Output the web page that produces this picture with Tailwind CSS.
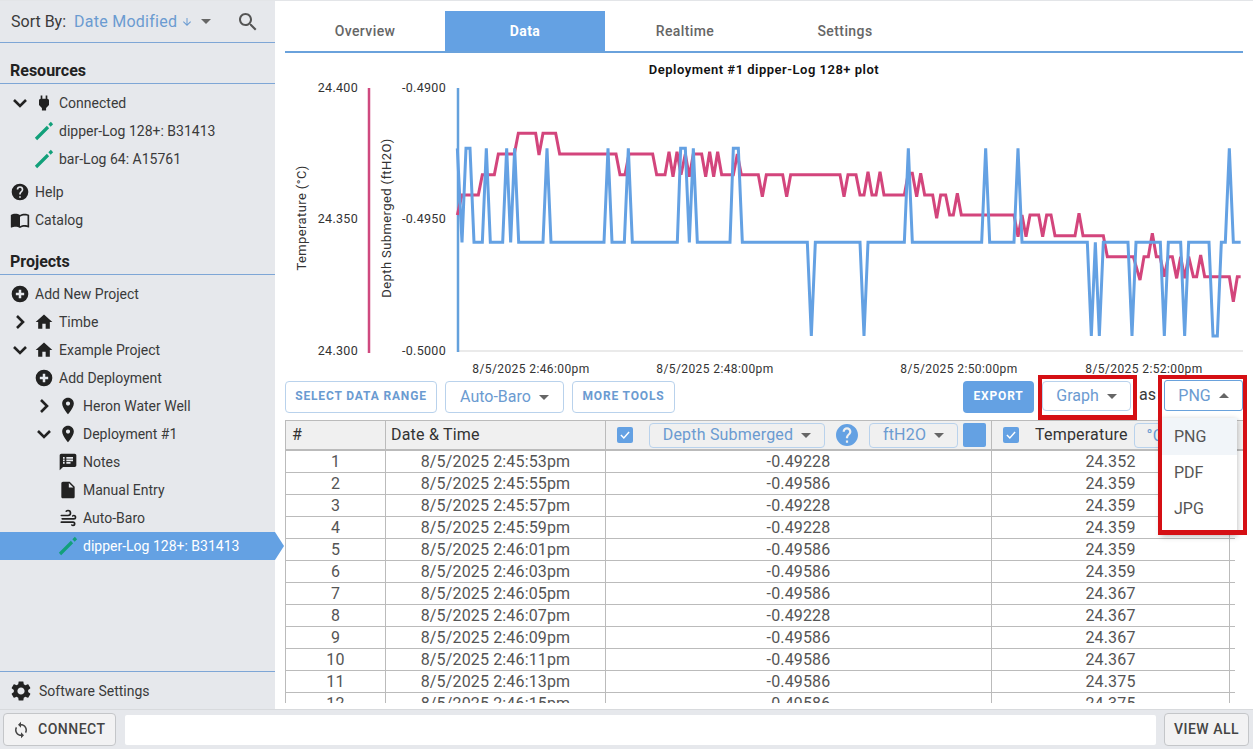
<!DOCTYPE html>
<html lang="en">
<head>
<meta charset="UTF-8" />
<title>Deployment Data</title>
<script src="https://cdn.jsdelivr.net/npm/@tailwindcss/browser@4"></script>
</head>
<body class="bg-white overflow-hidden">
<div class="w-[1253px] h-[749px] flex flex-col border-t border-[#e3e5e8] [font-family:Roboto,sans-serif] text-[14px] text-[#3a3a3a]">
  <div class="flex flex-1 min-h-0">

    <!-- sidebar -->
    <aside class="w-[275px] shrink-0 bg-[#e6e8ec] flex flex-col relative">
      <div class="h-[42px] flex items-center pl-[11px] border-b border-[#7ea6d6] text-[16px]">
        <span>Sort By:</span>
        <span class="ml-2 text-[#6b9bd1] tracking-[0.25px]">Date Modified</span>
        <svg class="ml-[4px] w-[12px] h-[12px]" viewBox="0 0 24 24" fill="#6b9bd1"><path d="M20 12l-1.41-1.41L13 16.17V4h-2v12.17l-5.58-5.59L4 12l8 8 8-8z"/></svg>
        <span class="ml-[8px] w-0 h-0 border-x-[5px] border-x-transparent border-t-[5px] border-t-[#666]"></span>
        <svg class="ml-[25px] w-[24px] h-[24px]" viewBox="0 0 24 24" fill="#555"><path d="M15.5 14h-.79l-.28-.27C15.41 12.59 16 11.11 16 9.5 16 5.91 13.09 3 9.5 3S3 5.91 3 9.5 5.91 16 9.5 16c1.61 0 3.09-.59 4.23-1.57l.27.28v.79l5 4.99L20.49 19l-4.99-5zm-6 0C7.01 14 5 11.99 5 9.5S7.01 5 9.5 5 14 7.01 14 9.5 11.99 14 9.5 14z"/></svg>
      </div>

      <h2 class="h-[41px] pl-[10px] pt-[18px] leading-[19px] text-[16px] font-bold text-[#222] border-b border-[#7ea6d6]">Resources</h2>
      <div class="pt-[5px]">
        <div class="h-7 flex items-center pl-2">
          <svg class="w-6 h-6" viewBox="0 0 24 24" fill="none" stroke="#222" stroke-width="2.6"><path d="M6 9l6 6 6-6"/></svg>
          <svg class="w-6 h-[20px]" viewBox="0 0 24 24" fill="#222"><path d="M16,7V3H14V7H10V3H8V7C7,7 6,8 6,9V14.5L9.5,18V21H14.5V18L18,14.5V9C18,8 17,7 16,7Z"/></svg>
          <span class="ml-[3px]">Connected</span>
        </div>
        <div class="h-7 flex items-center pl-8">
          <svg class="w-6 h-6" viewBox="0 0 24 24" fill="none" stroke="#12a07a" stroke-width="3.2"><path d="M4 20L16 8M17.5 6.5L20 4"/></svg>
          <span class="ml-[3px]">dipper-Log 128+: B31413</span>
        </div>
        <div class="h-7 flex items-center pl-8">
          <svg class="w-6 h-6" viewBox="0 0 24 24" fill="none" stroke="#12a07a" stroke-width="3.2"><path d="M4 20L16 8M17.5 6.5L20 4"/></svg>
          <span class="ml-[3px]">bar-Log 64: A15761</span>
        </div>
        <div class="h-7 flex items-center pl-2 mt-[5px]">
          <svg class="w-6 h-[20px]" viewBox="0 0 24 24" fill="#222"><path d="M15.07,11.25L14.17,12.17C13.45,12.89 13,13.5 13,15H11V14.5C11,13.39 11.45,12.39 12.17,11.67L13.41,10.41C13.78,10.05 14,9.55 14,9C14,7.89 13.1,7 12,7A2,2 0 0,0 10,9H8A4,4 0 0,1 12,5A4,4 0 0,1 16,9C16,9.88 15.64,10.67 15.07,11.25M13,19H11V17H13M12,2A10,10 0 0,0 2,12A10,10 0 0,0 12,22A10,10 0 0,0 22,12C22,6.47 17.5,2 12,2Z"/></svg>
          <span class="ml-[3px]">Help</span>
        </div>
        <div class="h-7 flex items-center pl-2">
          <svg class="w-6 h-[20px]" viewBox="0 0 24 24" fill="#222"><path d="M21 5c-1.11-.35-2.33-.5-3.5-.5-1.95 0-4.05.4-5.5 1.5-1.45-1.1-3.55-1.5-5.5-1.5S2.45 4.9 1 6v14.65c0 .25.25.5.5.5.1 0 .15-.05.25-.05C3.1 20.45 5.05 20 6.5 20c1.95 0 4.05.4 5.5 1.5 1.35-.85 3.8-1.5 5.5-1.5 1.65 0 3.35.3 4.75 1.05.1.05.15.05.25.05.25 0 .5-.25.5-.5V6c-.6-.45-1.25-.75-2-1zm0 13.5c-1.1-.35-2.3-.5-3.5-.5-1.7 0-4.15.65-5.5 1.5V8c1.35-.85 3.8-1.5 5.5-1.5 1.2 0 2.4.15 3.5.5v11.5z"/></svg>
          <span class="ml-[3px]">Catalog</span>
        </div>
      </div>

      <h2 class="h-[41px] pl-[10px] pt-[18px] leading-[19px] text-[16px] font-bold text-[#222] border-b border-[#7ea6d6]">Projects</h2>
      <div class="pt-[5px]">
        <div class="h-7 flex items-center pl-2">
          <svg class="w-6 h-[20px]" viewBox="0 0 24 24" fill="#222"><path d="M17,13.5H13.5V17H10.5V13.5H7V10.5H10.5V7H13.5V10.5H17M12,2A10,10 0 0,0 2,12A10,10 0 0,0 12,22A10,10 0 0,0 22,12A10,10 0 0,0 12,2Z"/></svg>
          <span class="ml-[3px]">Add New Project</span>
        </div>
        <div class="h-7 flex items-center pl-2">
          <svg class="w-6 h-6" viewBox="0 0 24 24" fill="none" stroke="#222" stroke-width="2.6"><path d="M9 6l6 6-6 6"/></svg>
          <svg class="w-6 h-[20px]" viewBox="0 0 24 24" fill="#222"><path d="M10 20v-6h4v6h5v-8h3L12 3 2 12h3v8z"/></svg>
          <span class="ml-[3px]">Timbe</span>
        </div>
        <div class="h-7 flex items-center pl-2">
          <svg class="w-6 h-6" viewBox="0 0 24 24" fill="none" stroke="#222" stroke-width="2.6"><path d="M6 9l6 6 6-6"/></svg>
          <svg class="w-6 h-[20px]" viewBox="0 0 24 24" fill="#222"><path d="M10 20v-6h4v6h5v-8h3L12 3 2 12h3v8z"/></svg>
          <span class="ml-[3px]">Example Project</span>
        </div>
        <div class="h-7 flex items-center pl-8">
          <svg class="w-6 h-[20px]" viewBox="0 0 24 24" fill="#222"><path d="M17,13.5H13.5V17H10.5V13.5H7V10.5H10.5V7H13.5V10.5H17M12,2A10,10 0 0,0 2,12A10,10 0 0,0 12,22A10,10 0 0,0 22,12A10,10 0 0,0 12,2Z"/></svg>
          <span class="ml-[3px]">Add Deployment</span>
        </div>
        <div class="h-7 flex items-center pl-8">
          <svg class="w-6 h-6" viewBox="0 0 24 24" fill="none" stroke="#222" stroke-width="2.6"><path d="M9 6l6 6-6 6"/></svg>
          <svg class="w-6 h-[20px]" viewBox="0 0 24 24" fill="#222"><path d="M12 2C8.13 2 5 5.13 5 9c0 5.25 7 13 7 13s7-7.75 7-13c0-3.87-3.13-7-7-7zm0 9.5c-1.38 0-2.5-1.12-2.5-2.5s1.12-2.5 2.5-2.5 2.5 1.12 2.5 2.5-1.12 2.5-2.5 2.5z"/></svg>
          <span class="ml-[3px]">Heron Water Well</span>
        </div>
        <div class="h-7 flex items-center pl-8">
          <svg class="w-6 h-6" viewBox="0 0 24 24" fill="none" stroke="#222" stroke-width="2.6"><path d="M6 9l6 6 6-6"/></svg>
          <svg class="w-6 h-[20px]" viewBox="0 0 24 24" fill="#222"><path d="M12 2C8.13 2 5 5.13 5 9c0 5.25 7 13 7 13s7-7.75 7-13c0-3.87-3.13-7-7-7zm0 9.5c-1.38 0-2.5-1.12-2.5-2.5s1.12-2.5 2.5-2.5 2.5 1.12 2.5 2.5-1.12 2.5-2.5 2.5z"/></svg>
          <span class="ml-[3px]">Deployment #1</span>
        </div>
        <div class="h-7 flex items-center pl-14">
          <svg class="w-6 h-[20px]" viewBox="0 0 24 24" fill="#222"><path d="M20 2H4c-1.1 0-1.99.9-1.99 2L2 22l4-4h14c1.1 0 2-.9 2-2V4c0-1.1-.9-2-2-2zM8 14H6v-2h2v2zm0-3H6V9h2v2zm0-3H6V6h2v2zm7 6h-5v-2h5v2zm3-3h-8V9h8v2zm0-3h-8V6h8v2z"/></svg>
          <span class="ml-[3px]">Notes</span>
        </div>
        <div class="h-7 flex items-center pl-14">
          <svg class="w-6 h-[20px]" viewBox="0 0 24 24" fill="#222"><path d="M6 2c-1.1 0-1.99.9-1.99 2L4 20c0 1.1.89 2 1.99 2H18c1.1 0 2-.9 2-2V8l-6-6H6zm7 7V3.5L18.5 9H13z"/></svg>
          <span class="ml-[3px]">Manual Entry</span>
        </div>
        <div class="h-7 flex items-center pl-14">
          <svg class="w-6 h-[20px]" viewBox="0 0 24 24" fill="#222"><path d="M4,10A1,1 0 0,1 3,9A1,1 0 0,1 4,8H12A2,2 0 0,0 14,6A2,2 0 0,0 12,4C11.45,4 10.95,4.22 10.59,4.59C10.2,5 9.56,5 9.17,4.59C8.78,4.2 8.78,3.56 9.17,3.17C9.9,2.45 10.9,2 12,2A4,4 0 0,1 16,6A4,4 0 0,1 12,10H4M19,12A1,1 0 0,0 20,11A1,1 0 0,0 19,10C18.72,10 18.47,10.11 18.29,10.29C17.9,10.68 17.27,10.68 16.88,10.29C16.5,9.9 16.5,9.27 16.88,8.88C17.42,8.34 18.17,8 19,8A3,3 0 0,1 22,11A3,3 0 0,1 19,14H5A1,1 0 0,1 4,13A1,1 0 0,1 5,12H19M18,18H4A1,1 0 0,1 3,17A1,1 0 0,1 4,16H18A3,3 0 0,1 21,19A3,3 0 0,1 18,22C17.17,22 16.42,21.66 15.88,21.12C15.5,20.73 15.5,20.1 15.88,19.71C16.27,19.32 16.9,19.32 17.29,19.71C17.47,19.89 17.72,20 18,20A1,1 0 0,0 19,19A1,1 0 0,0 18,18Z"/></svg>
          <span class="ml-[3px]">Auto-Baro</span>
        </div>
        <div class="h-7 flex items-center pl-14 bg-[#64a1e3] text-white relative">
          <svg class="w-6 h-6" viewBox="0 0 24 24" fill="none" stroke="#12a07a" stroke-width="3.2"><path d="M4 20L16 8M17.5 6.5L20 4"/></svg>
          <span class="ml-[3px]">dipper-Log 128+: B31413</span>
          <span class="absolute left-full top-0 w-0 h-0 border-y-[14px] border-y-transparent border-l-[9px] border-l-[#64a1e3]"></span>
        </div>
      </div>

      <div class="mt-auto h-[38px] pt-px border-t border-[#7ea6d6] flex items-center pl-[9px]">
        <svg class="w-6 h-6" viewBox="0 0 24 24" fill="#222"><path d="M19.14 12.94c.04-.3.06-.61.06-.94 0-.32-.02-.64-.07-.94l2.03-1.58c.18-.14.23-.41.12-.61l-1.92-3.32c-.12-.22-.37-.29-.59-.22l-2.39.96c-.5-.38-1.03-.7-1.62-.94l-.36-2.54c-.04-.24-.24-.41-.48-.41h-3.84c-.24 0-.43.17-.47.41l-.36 2.54c-.59.24-1.13.57-1.62.94l-2.39-.96c-.22-.08-.47 0-.59.22L2.74 8.87c-.12.21-.08.47.12.61l2.03 1.58c-.05.3-.09.63-.09.94s.02.64.07.94l-2.03 1.58c-.18.14-.23.41-.12.61l1.92 3.32c.12.22.37.29.59.22l2.39-.96c.5.38 1.03.7 1.62.94l.36 2.54c.05.24.24.41.48.41h3.84c.24 0 .44-.17.47-.41l.36-2.54c.59-.24 1.13-.56 1.62-.94l2.39.96c.22.08.47 0 .59-.22l1.92-3.32c.12-.22.07-.47-.12-.61l-2.01-1.58zM12 15.6c-1.98 0-3.6-1.62-3.6-3.6s1.62-3.6 3.6-3.6 3.6 1.62 3.6 3.6-1.62 3.6-3.6 3.6z"/></svg>
        <span class="ml-[6px]">Software Settings</span>
      </div>
    </aside>

    <!-- main -->
    <main class="flex-1 min-w-0 pl-[10px] pr-[10px] relative">
      <nav class="mt-[10px] h-[42px] flex border-b-2 border-[#6aa2dc] text-[14px] font-medium tracking-[0.4px] text-[#666]">
        <a class="w-[160px] flex items-center justify-center">Overview</a>
        <a class="w-[160px] flex items-center justify-center bg-[#64a1e3] text-white font-bold">Data</a>
        <a class="w-[160px] flex items-center justify-center">Realtime</a>
        <a class="w-[160px] flex items-center justify-center">Settings</a>
      </nav>

      <svg class="block" width="958" height="327" viewBox="285 53 958 327">
        <g font-family="Roboto, sans-serif" font-size="13" fill="#333" letter-spacing="0.3">
          <text x="764" y="74" text-anchor="middle" font-weight="600" fill="#111" letter-spacing="0.5">Deployment #1 dipper-Log 128+ plot</text>
          <g font-size="12.5">
            <text x="358" y="92" text-anchor="end">24.400</text>
            <text x="358" y="223" text-anchor="end">24.350</text>
            <text x="358" y="355" text-anchor="end">24.300</text>
            <text x="446" y="92" text-anchor="end">-0.4900</text>
            <text x="446" y="223" text-anchor="end">-0.4950</text>
            <text x="446" y="355" text-anchor="end">-0.5000</text>
          </g>
          <text transform="translate(306 218) rotate(-90)" text-anchor="middle" letter-spacing="0.4">Temperature (°C)</text>
          <text transform="translate(391 218) rotate(-90)" text-anchor="middle" letter-spacing="0.4">Depth Submerged (ftH2O)</text>
          <g font-size="12" letter-spacing="0.4">
            <text x="531" y="373" text-anchor="middle">8/5/2025 2:46:00pm</text>
            <text x="715" y="373" text-anchor="middle">8/5/2025 2:48:00pm</text>
            <text x="959" y="373" text-anchor="middle">8/5/2025 2:50:00pm</text>
            <text x="1144" y="373" text-anchor="middle">8/5/2025 2:52:00pm</text>
          </g>
        </g>
        <path d="M369 88V353" stroke="#cf4a7f" stroke-width="2.5"/>
        <path d="M458 351H1243" stroke="#e3e3e3" stroke-width="1.5"/>
        <path d="M458 88V352" stroke="#64a1dc" stroke-width="2.5"/>
        <g fill="none" stroke-linejoin="miter" stroke-width="9">
          <g transform="translate(450 80) scale(0.33333)" stroke="#d3457c">
            <polyline points="22,405 36,345 85,345 97,284 133,284 145,222 193,222 205,160 257,160 267,225 279,160 317,160 329,222 498,222 510,284 525,284 537,222 608,222 620,284 645,284 657,215 669,290 681,215 693,284 706,222 718,290 730,222 755,222 767,290 779,215 791,290 803,215 815,284 850,284 862,222 874,284 925,284 937,350 949,284 998,284 1010,350 1022,284 1170,284 1182,350 1194,284 1200,284"/>
          </g>
          <g transform="translate(850 80) scale(0.33333)" stroke="#d3457c">
            <polyline points="0,284 18,284 30,345 42,345 54,275 66,345 78,345 90,275 102,345 163,345 175,280 187,280 200,350 212,280 224,345 248,345 260,415 272,345 287,345 299,405 310,405 322,340 334,405 492,405 504,470 516,405 528,470 540,405 566,405 578,470 590,405 603,405 615,467 675,467 687,400 699,467 760,467 772,530 850,530 870,600 882,530 895,530 907,460 919,530 930,530 943,590 955,530 967,530 980,595 992,530 1004,595 1016,530 1030,590 1040,590 1052,525 1064,590 1138,590 1150,665 1162,590 1172,590"/>
          </g>
          <g transform="translate(450 80) scale(0.33333)" stroke="#64a1e3">
            <polyline points="22,205 36,487 48,205 60,205 72,487 97,487 109,205 121,487 158,487 170,205 182,487 194,205 206,487 279,487 291,205 303,487 462,487 474,205 486,487 523,487 535,205 547,487 682,487 692,205 706,205 718,487 730,205 742,487 840,487 850,205 865,205 877,487 1072,487 1084,768 1096,487 1200,487"/>
          </g>
          <g transform="translate(850 80) scale(0.33333)" stroke="#64a1e3">
            <polyline points="0,487 30,487 42,768 54,487 163,487 175,205 187,487 395,487 407,205 419,487 492,487 504,205 516,487 712,487 724,768 736,487 748,768 760,487 834,487 846,768 858,487 931,487 943,768 955,487 992,487 1004,768 1016,487 1077,487 1089,768 1102,768 1114,487 1126,487 1138,205 1150,487 1172,487"/>
          </g>
        </g>
      </svg>

      <div class="mt-[1px] h-[32px] flex items-stretch">
        <button class="w-[152px] pb-[2px] border border-[#b9d2ec] rounded-[4px] text-[12px] font-bold tracking-[0.85px] text-[#6b9bd1]">SELECT DATA RANGE</button>
        <button class="ml-2 w-[119px] border border-[#b9d2ec] rounded-[4px] text-[16px] text-[#6b9bd1] flex items-center justify-center gap-[8px]">Auto-Baro <span class="w-0 h-0 border-x-[5px] border-x-transparent border-t-[5px] border-t-[#666]"></span></button>
        <button class="ml-2 w-[103px] pb-[2px] border border-[#b9d2ec] rounded-[4px] text-[12px] font-bold tracking-[0.85px] text-[#6b9bd1]">MORE TOOLS</button>
        <button class="ml-[288px] w-[71px] pb-[2px] bg-[#64a1e3] rounded-[4px] text-[12px] font-bold tracking-[0.85px] text-white">EXPORT</button>
        <button class="ml-2 w-[89px] h-[30px] border border-[#b9d2ec] rounded-[4px] text-[16px] text-[#6b9bd1] flex items-center justify-center gap-[8px]">Graph <span class="w-0 h-0 border-x-[5px] border-x-transparent border-t-[5px] border-t-[#666]"></span></button>
        <span class="ml-[8px] w-[25px] text-[16px] leading-[28px]">as</span>
        <button class="-mt-px w-[79px] h-[31px] border-[1.5px] border-[#6aa2dc] rounded-[3px] text-[16px] text-[#6b9bd1] flex items-center justify-center gap-[8px]">PNG <span class="w-0 h-0 border-x-[5px] border-x-transparent border-b-[5px] border-b-[#666]"></span></button>
      </div>

      <!-- data table -->
      <div class="mt-[7px] h-[283px] overflow-hidden text-[16px] text-[#555] tracking-[0.15px]">
        <div class="h-[31px] w-[958px] grid grid-cols-[99px_220px_386px_252px] bg-[#f0f0f0] border-l border-t border-b-2 border-[#bbb] text-[#333] tracking-[0.2px]">
          <div class="flex items-center pl-[6px]">#</div>
          <div class="flex items-center pl-[5px] border-l border-[#bbb]">Date &amp; Time</div>
          <div class="flex items-center pl-[11px] border-l border-[#bbb]">
            <span class="w-[16px] h-[16px] rounded-[2px] bg-[#64a1e3] flex items-center justify-center"><svg class="w-[14px] h-[14px]" viewBox="0 0 24 24" fill="none" stroke="#fff" stroke-width="2.5"><path d="M5 12l5 5 9-10"/></svg></span>
            <span class="ml-[16px] w-[176px] h-[25px] border border-[#b9d2ec] rounded-[4px] text-[#6b9bd1] flex items-center justify-center gap-[8px]">Depth Submerged <span class="w-0 h-0 border-x-[5px] border-x-transparent border-t-[5px] border-t-[#666]"></span></span>
            <svg class="ml-[11px] w-[22px] h-[22px]" viewBox="2 2 20 20" fill="#64a1e3"><path d="M15.07,11.25L14.17,12.17C13.45,12.89 13,13.5 13,15H11V14.5C11,13.39 11.45,12.39 12.17,11.67L13.41,10.41C13.78,10.05 14,9.55 14,9C14,7.89 13.1,7 12,7A2,2 0 0,0 10,9H8A4,4 0 0,1 12,5A4,4 0 0,1 16,9C16,9.88 15.64,10.67 15.07,11.25M13,19H11V17H13M12,2A10,10 0 0,0 2,12A10,10 0 0,0 12,22A10,10 0 0,0 22,12C22,6.47 17.5,2 12,2Z"/></svg>
            <span class="ml-[11px] w-[89px] h-[25px] border border-[#b9d2ec] rounded-[4px] text-[#6b9bd1] flex items-center justify-center gap-[8px]">ftH2O <span class="w-0 h-0 border-x-[5px] border-x-transparent border-t-[5px] border-t-[#666]"></span></span>
            <span class="ml-[5px] w-[23px] h-[24px] rounded-[2px] bg-[#64a1e3]"></span>
          </div>
          <div class="flex items-center pl-[11px] border-l border-[#bbb] overflow-hidden">
            <span class="shrink-0 w-[16px] h-[16px] rounded-[2px] bg-[#64a1e3] flex items-center justify-center"><svg class="w-[14px] h-[14px]" viewBox="0 0 24 24" fill="none" stroke="#fff" stroke-width="2.5"><path d="M5 12l5 5 9-10"/></svg></span>
            <span class="ml-[16px] shrink-0">Temperature</span>
            <span class="ml-[6px] shrink-0 w-[60px] h-[25px] border border-[#b9d2ec] rounded-[4px] text-[#6b9bd1] pl-[12px] leading-[23px]">°C</span>
          </div>
        </div>

        <div class="h-[22px] w-[950px] grid grid-cols-[100px_220px_386px_238px_6px] border-b border-[#bbb] leading-[21px] text-center"><div class="border-l border-[#bbb]">1</div><div class="border-l border-[#bbb]">8/5/2025 2:45:53pm</div><div class="border-l border-[#bbb]">-0.49228</div><div class="border-l border-[#bbb]">24.352</div><div class="border-l border-[#bbb]"></div></div>
        <div class="h-[22px] w-[950px] grid grid-cols-[100px_220px_386px_238px_6px] border-b border-[#bbb] leading-[21px] text-center"><div class="border-l border-[#bbb]">2</div><div class="border-l border-[#bbb]">8/5/2025 2:45:55pm</div><div class="border-l border-[#bbb]">-0.49586</div><div class="border-l border-[#bbb]">24.359</div><div class="border-l border-[#bbb]"></div></div>
        <div class="h-[22px] w-[950px] grid grid-cols-[100px_220px_386px_238px_6px] border-b border-[#bbb] leading-[21px] text-center"><div class="border-l border-[#bbb]">3</div><div class="border-l border-[#bbb]">8/5/2025 2:45:57pm</div><div class="border-l border-[#bbb]">-0.49228</div><div class="border-l border-[#bbb]">24.359</div><div class="border-l border-[#bbb]"></div></div>
        <div class="h-[22px] w-[950px] grid grid-cols-[100px_220px_386px_238px_6px] border-b border-[#bbb] leading-[21px] text-center"><div class="border-l border-[#bbb]">4</div><div class="border-l border-[#bbb]">8/5/2025 2:45:59pm</div><div class="border-l border-[#bbb]">-0.49228</div><div class="border-l border-[#bbb]">24.359</div><div class="border-l border-[#bbb]"></div></div>
        <div class="h-[22px] w-[950px] grid grid-cols-[100px_220px_386px_238px_6px] border-b border-[#bbb] leading-[21px] text-center"><div class="border-l border-[#bbb]">5</div><div class="border-l border-[#bbb]">8/5/2025 2:46:01pm</div><div class="border-l border-[#bbb]">-0.49586</div><div class="border-l border-[#bbb]">24.359</div><div class="border-l border-[#bbb]"></div></div>
        <div class="h-[22px] w-[950px] grid grid-cols-[100px_220px_386px_238px_6px] border-b border-[#bbb] leading-[21px] text-center"><div class="border-l border-[#bbb]">6</div><div class="border-l border-[#bbb]">8/5/2025 2:46:03pm</div><div class="border-l border-[#bbb]">-0.49586</div><div class="border-l border-[#bbb]">24.359</div><div class="border-l border-[#bbb]"></div></div>
        <div class="h-[22px] w-[950px] grid grid-cols-[100px_220px_386px_238px_6px] border-b border-[#bbb] leading-[21px] text-center"><div class="border-l border-[#bbb]">7</div><div class="border-l border-[#bbb]">8/5/2025 2:46:05pm</div><div class="border-l border-[#bbb]">-0.49586</div><div class="border-l border-[#bbb]">24.367</div><div class="border-l border-[#bbb]"></div></div>
        <div class="h-[22px] w-[950px] grid grid-cols-[100px_220px_386px_238px_6px] border-b border-[#bbb] leading-[21px] text-center"><div class="border-l border-[#bbb]">8</div><div class="border-l border-[#bbb]">8/5/2025 2:46:07pm</div><div class="border-l border-[#bbb]">-0.49228</div><div class="border-l border-[#bbb]">24.367</div><div class="border-l border-[#bbb]"></div></div>
        <div class="h-[22px] w-[950px] grid grid-cols-[100px_220px_386px_238px_6px] border-b border-[#bbb] leading-[21px] text-center"><div class="border-l border-[#bbb]">9</div><div class="border-l border-[#bbb]">8/5/2025 2:46:09pm</div><div class="border-l border-[#bbb]">-0.49586</div><div class="border-l border-[#bbb]">24.367</div><div class="border-l border-[#bbb]"></div></div>
        <div class="h-[22px] w-[950px] grid grid-cols-[100px_220px_386px_238px_6px] border-b border-[#bbb] leading-[21px] text-center"><div class="border-l border-[#bbb]">10</div><div class="border-l border-[#bbb]">8/5/2025 2:46:11pm</div><div class="border-l border-[#bbb]">-0.49586</div><div class="border-l border-[#bbb]">24.367</div><div class="border-l border-[#bbb]"></div></div>
        <div class="h-[22px] w-[950px] grid grid-cols-[100px_220px_386px_238px_6px] border-b border-[#bbb] leading-[21px] text-center"><div class="border-l border-[#bbb]">11</div><div class="border-l border-[#bbb]">8/5/2025 2:46:13pm</div><div class="border-l border-[#bbb]">-0.49586</div><div class="border-l border-[#bbb]">24.375</div><div class="border-l border-[#bbb]"></div></div>
        <div class="h-[22px] w-[950px] grid grid-cols-[100px_220px_386px_238px_6px] border-b border-[#bbb] leading-[21px] text-center"><div class="border-l border-[#bbb]">12</div><div class="border-l border-[#bbb]">8/5/2025 2:46:15pm</div><div class="border-l border-[#bbb]">-0.49586</div><div class="border-l border-[#bbb]">24.375</div><div class="border-l border-[#bbb]"></div></div>
      </div>

      <!-- open format menu and the callout boxes sit over the content -->
      <div class="absolute left-[886px] top-[417px] w-[76px] h-[116px] bg-white shadow-[0_2px_6px_rgba(0,0,0,0.3)] text-[16px] text-[#555]">
        <div class="h-[37px] pl-[13px] leading-[37px] bg-[#f1f5f9]">PNG</div>
        <div class="h-[36px] pl-[13px] leading-[36px]">PDF</div>
        <div class="h-[36px] pl-[13px] leading-[36px]">JPG</div>
      </div>
      <div class="absolute left-[763px] top-[374px] w-[99px] h-[45px] border-[4px] border-b-[5px] border-[#d50f14]"></div>
      <div class="absolute left-[883px] top-[374px] w-[89px] h-[160px] border-[4px] border-b-[5px] border-[#d50f14]"></div>
    </main>
  </div>

  <!-- bottom bar -->
  <footer class="h-[40px] shrink-0 bg-[#e6e8ec] border-t border-[#d8dadd] flex items-center pl-[3px] pr-[4px]">
    <button class="w-[113px] h-[33px] bg-[#f2f2f3] border border-[#c4c6c9] rounded-[4px] flex items-center pl-[8px] text-[14px] font-medium tracking-[0.5px] text-[#444]">
      <svg class="w-[18px] h-[18px]" viewBox="0 0 24 24" fill="#444"><path d="M12 4V1L8 5l4 4V6c3.31 0 6 2.69 6 6 0 1.01-.25 1.97-.7 2.8l1.46 1.46C19.54 15.03 20 13.57 20 12c0-4.42-3.58-8-8-8zm0 14c-3.31 0-6-2.69-6-6 0-1.01.25-1.97.7-2.8L5.24 7.74C4.46 8.97 4 10.43 4 12c0 4.42 3.58 8 8 8v3l4-4-4-4v3z"/></svg>
      <span class="ml-[8px]">CONNECT</span>
    </button>
    <div class="ml-[9px] flex-1 h-[30px] bg-white rounded-[2px]"></div>
    <button class="ml-[8px] w-[85px] h-[33px] bg-[#f2f2f3] border border-[#c4c6c9] rounded-[4px] text-[14px] font-medium tracking-[0.5px] text-[#444]">VIEW ALL</button>
  </footer>
</div>
</body>
</html>
